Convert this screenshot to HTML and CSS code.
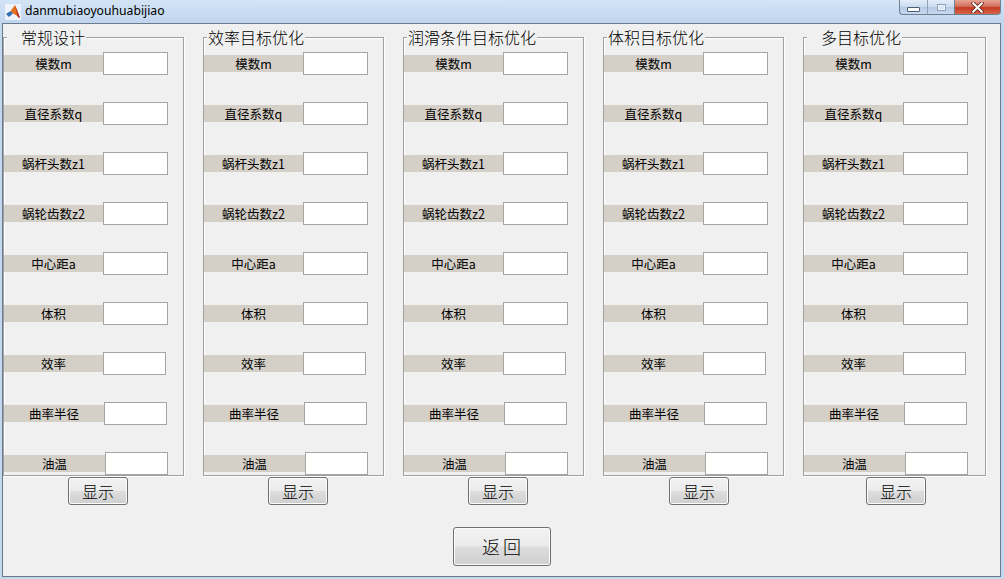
FILE: index.html
```html
<!DOCTYPE html>
<html lang="zh">
<head>
<meta charset="utf-8">
<title>danmubiaoyouhuabijiao</title>
<link rel="stylesheet" href="styles.css">
</head>
<body>
<div class="window">
  <div class="titlebar">
    <svg class="app-icon" viewBox="0 0 16 16" aria-hidden="true">
      <rect x="0" y="0" width="16" height="16" fill="#eef3f9"/>
      <polygon points="1,10 5.5,7 8,9.5 4,13" fill="#2f6fb5"/>
      <polygon points="5.5,7 10,1 15,14 11.5,11.5 8,9.5" fill="#e2701f"/>
      <polygon points="10,1 15,14 12.8,13" fill="#a5241a"/>
    </svg>
    <span class="title">danmubiaoyouhuabijiao</span>
    <div class="controls">
      <span class="ctl ctl-min"><span class="min-glyph"></span></span>
      <span class="ctl ctl-max"><span class="max-glyph"></span></span>
      <span class="ctl ctl-close">
        <svg class="close-glyph" viewBox="0 0 12 10" aria-hidden="true">
          <path d="M2 1 L10 9 M10 1 L2 9" stroke="#5a1c16" stroke-width="3.4" stroke-linecap="round"/>
          <path d="M2 1 L10 9 M10 1 L2 9" stroke="#ffffff" stroke-width="2" stroke-linecap="round"/>
        </svg>
      </span>
    </div>
  </div>
  <div class="frame">
    <div class="panels">

      <div class="col">
        <fieldset class="panel">
          <legend class="panel-title panel-title--indent">常规设计</legend>
          <div class="rows">
            <div class="row"><span class="label">模数m</span><span class="box"></span></div>
            <div class="row"><span class="label">直径系数q</span><span class="box"></span></div>
            <div class="row"><span class="label">蜗杆头数z1</span><span class="box"></span></div>
            <div class="row"><span class="label">蜗轮齿数z2</span><span class="box"></span></div>
            <div class="row"><span class="label">中心距a</span><span class="box"></span></div>
            <div class="row"><span class="label">体积</span><span class="box"></span></div>
            <div class="row"><span class="label">效率</span><span class="box box--short"></span></div>
            <div class="row"><span class="label label--w100">曲率半径</span><span class="box box--short"></span></div>
            <div class="row"><span class="label label--w101">油温</span><span class="box box--short"></span></div>
          </div>
        </fieldset>
        <button class="btn btn-show">显示</button>
      </div>

      <div class="col">
        <fieldset class="panel">
          <legend class="panel-title">效率目标优化</legend>
          <div class="rows">
            <div class="row"><span class="label">模数m</span><span class="box"></span></div>
            <div class="row"><span class="label">直径系数q</span><span class="box"></span></div>
            <div class="row"><span class="label">蜗杆头数z1</span><span class="box"></span></div>
            <div class="row"><span class="label">蜗轮齿数z2</span><span class="box"></span></div>
            <div class="row"><span class="label">中心距a</span><span class="box"></span></div>
            <div class="row"><span class="label">体积</span><span class="box"></span></div>
            <div class="row"><span class="label">效率</span><span class="box box--short"></span></div>
            <div class="row"><span class="label label--w100">曲率半径</span><span class="box box--short"></span></div>
            <div class="row"><span class="label label--w101">油温</span><span class="box box--short"></span></div>
          </div>
        </fieldset>
        <button class="btn btn-show">显示</button>
      </div>

      <div class="col">
        <fieldset class="panel">
          <legend class="panel-title">润滑条件目标优化</legend>
          <div class="rows">
            <div class="row"><span class="label">模数m</span><span class="box"></span></div>
            <div class="row"><span class="label">直径系数q</span><span class="box"></span></div>
            <div class="row"><span class="label">蜗杆头数z1</span><span class="box"></span></div>
            <div class="row"><span class="label">蜗轮齿数z2</span><span class="box"></span></div>
            <div class="row"><span class="label">中心距a</span><span class="box"></span></div>
            <div class="row"><span class="label">体积</span><span class="box"></span></div>
            <div class="row"><span class="label">效率</span><span class="box box--short"></span></div>
            <div class="row"><span class="label label--w100">曲率半径</span><span class="box box--short"></span></div>
            <div class="row"><span class="label label--w101">油温</span><span class="box box--short"></span></div>
          </div>
        </fieldset>
        <button class="btn btn-show">显示</button>
      </div>

      <div class="col">
        <fieldset class="panel">
          <legend class="panel-title">体积目标优化</legend>
          <div class="rows">
            <div class="row"><span class="label">模数m</span><span class="box"></span></div>
            <div class="row"><span class="label">直径系数q</span><span class="box"></span></div>
            <div class="row"><span class="label">蜗杆头数z1</span><span class="box"></span></div>
            <div class="row"><span class="label">蜗轮齿数z2</span><span class="box"></span></div>
            <div class="row"><span class="label">中心距a</span><span class="box"></span></div>
            <div class="row"><span class="label">体积</span><span class="box"></span></div>
            <div class="row"><span class="label">效率</span><span class="box box--short"></span></div>
            <div class="row"><span class="label label--w100">曲率半径</span><span class="box box--short"></span></div>
            <div class="row"><span class="label label--w101">油温</span><span class="box box--short"></span></div>
          </div>
        </fieldset>
        <button class="btn btn-show btn-show--r1">显示</button>
      </div>

      <div class="col col--wide">
        <fieldset class="panel">
          <legend class="panel-title panel-title--indent">多目标优化</legend>
          <div class="rows">
            <div class="row"><span class="label">模数m</span><span class="box"></span></div>
            <div class="row"><span class="label">直径系数q</span><span class="box"></span></div>
            <div class="row"><span class="label">蜗杆头数z1</span><span class="box"></span></div>
            <div class="row"><span class="label">蜗轮齿数z2</span><span class="box"></span></div>
            <div class="row"><span class="label">中心距a</span><span class="box"></span></div>
            <div class="row"><span class="label">体积</span><span class="box"></span></div>
            <div class="row"><span class="label">效率</span><span class="box box--short"></span></div>
            <div class="row"><span class="label label--w100">曲率半径</span><span class="box box--short"></span></div>
            <div class="row"><span class="label label--w101">油温</span><span class="box box--short"></span></div>
          </div>
        </fieldset>
        <button class="btn btn-show btn-show--l2">显示</button>
      </div>

    </div>
    <div class="footer">
      <button class="btn btn-back">返回</button>
    </div>
  </div>
</div>
</body>
</html>
```
FILE: styles.css
```css
html, body {
  margin: 0;
  padding: 0;
  background: #f0f0f0;
}

.window {
  width: 1004px;
  height: 579px;
  display: flex;
  flex-direction: column;
  background: #c3d8ef;
  font-family: "Noto Sans CJK SC", "Noto Sans", sans-serif;
  color: #000;
  overflow: hidden;
}

/* ---------- title bar ---------- */
.titlebar {
  height: 23px;
  flex: none;
  display: flex;
  align-items: flex-start;
  padding-right: 3px;
  background: linear-gradient(#d4e4f6, #bfd5ee);
}

.app-icon {
  width: 16px;
  height: 16px;
  margin: 4px 0 0 5px;
  flex: none;
}

.title {
  margin-left: 4px;
  font: 12.2px/22px "Noto Sans", sans-serif;
  color: #000;
}

.controls {
  margin-left: auto;
  display: flex;
  height: 15px;
}

.ctl {
  height: 15px;
  box-sizing: border-box;
  display: flex;
  align-items: center;
  justify-content: center;
  border: 1px solid #6f7f92;
  border-top: none;
}

.ctl-min {
  width: 28px;
  border-radius: 0 0 0 4px;
  border-right: none;
  background: linear-gradient(#e3edf8 0%, #c9daee 50%, #b4cae4 51%, #c6d9ef 100%);
}

.ctl-max {
  width: 27px;
  border-right: none;
  border-left: 1px solid #8fa2b8;
  background: linear-gradient(#e3edf8 0%, #c9daee 50%, #b4cae4 51%, #c6d9ef 100%);
}

.ctl-close {
  width: 47px;
  border-radius: 0 0 4px 0;
  background: linear-gradient(#e8a393 0%, #d3705d 45%, #c23b22 55%, #d9654b 100%);
}

.min-glyph {
  width: 11px;
  height: 3px;
  margin-top: 4px;
  background: #fff;
  border: 1px solid #4c5c70;
  border-radius: 1px;
}

.max-glyph {
  width: 9px;
  height: 7px;
  box-sizing: border-box;
  border: 1px solid #8ea3bb;
  background: #d9e5f2;
  box-shadow: inset 0 0 0 1px #eef4fa;
}

.close-glyph {
  width: 13px;
  height: 11px;
}

/* ---------- client frame ---------- */
.frame {
  flex: 1;
  margin: 0 3px 2px 2px;
  border: 1px solid #6c7b8b;
  background: #f0f0f0;
  display: flex;
  flex-direction: column;
}

.panels {
  display: flex;
  gap: 19px;
  padding-top: 4px;
}

.col {
  width: 181px;
  display: flex;
  flex-direction: column;
  align-items: flex-start;
}

.col--wide {
  width: 183px;
}

.panel {
  width: 100%;
  box-sizing: border-box;
  margin: 0;
  padding: 6px 0 0 0;
  min-width: 0;
  border: 1px solid #a0a0a0;
  box-shadow: inset 1px 1px 0 #ffffff, 1px 1px 0 #ffffff;
}

.panel-title {
  margin-left: 3px;
  padding: 0 1px;
  font-size: 16px;
  font-weight: 300;
  line-height: 18px;
  background: #f0f0f0;
  white-space: nowrap;
}

.panel-title--indent {
  padding-left: 14px;
}

.rows {
  display: flex;
  flex-direction: column;
  gap: 27px;
}

.row {
  display: flex;
  align-items: center;
  height: 23px;
}

.label {
  width: 99px;
  height: 17px;
  flex: none;
  background: #d4d0c8;
  font-size: 12.5px;
  font-weight: 400;
  line-height: 17px;
  text-align: center;
  white-space: nowrap;
}

.label--w100 { width: 100px; }
.label--w101 { width: 101px; }

.box {
  width: 65px;
  height: 23px;
  flex: none;
  box-sizing: border-box;
  border: 1px solid #a5a5a5;
  background: #ffffff;
}

.box--short { width: 63px; }

/* ---------- buttons ---------- */
.btn {
  padding: 0;
  box-sizing: border-box;
  font-family: "Noto Sans CJK SC", sans-serif;
  font-weight: 300;
  color: #000;
  border: 1px solid #707070;
  border-radius: 3px;
  background: linear-gradient(#f2f2f2 0%, #ebebeb 48%, #dddddd 52%, #cfcfcf 100%);
  box-shadow: inset 0 0 0 1px #fcfcfc;
}

.btn-show {
  width: 60px;
  height: 28px;
  margin: 1px 0 0 65px;
  font-size: 16px;
  line-height: 26px;
}

.btn-show--r1 { margin-left: 66px; }
.btn-show--l2 { margin-left: 63px; }

.footer {
  display: flex;
  justify-content: center;
  margin-top: 22px;
}

.btn-back {
  width: 98px;
  height: 39px;
  font-size: 18px;
  line-height: 37px;
  letter-spacing: 3px;
  text-indent: 3px;
}
```
